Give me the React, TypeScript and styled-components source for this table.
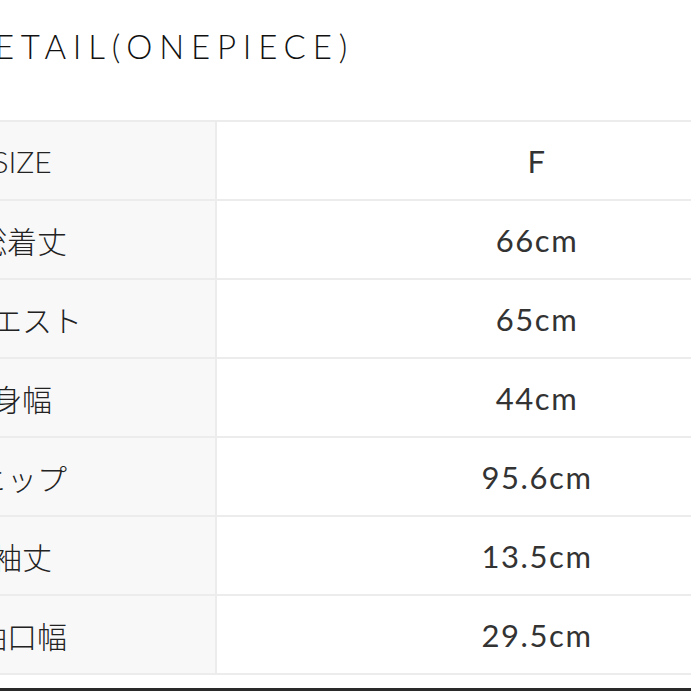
import React from "react";
import styled, { createGlobalStyle } from "styled-components";

const GlobalStyle = createGlobalStyle`
  html, body {
    margin: 0;
    padding: 0;
    background: #ffffff;
  }
  body {
    font-family: Lato, "Noto Sans CJK JP", sans-serif;
    color: #222222;
  }
`;

const Page = styled.div`
  width: 691px;
  height: 691px;
  overflow: hidden;
  display: flex;
  flex-direction: column;
  background: #ffffff;
`;

const Frame = styled.div`
  flex: 1;
  margin-left: -171px;
  display: flex;
  flex-direction: column;
`;

const Title = styled.h2`
  margin: 0;
  padding: 26px 0 0 134px;
  height: 120px;
  box-sizing: border-box;
  font-family: Lato, sans-serif;
  font-weight: 300;
  font-size: 33px;
  line-height: 40px;
  letter-spacing: 6.8px;
  color: #111111;
  white-space: nowrap;
`;

const Table = styled.div`
  display: grid;
  grid-template-columns: 388px 640px;
  border-top: 2px solid #ececec;
  width: 1028px;
`;

const LabelCell = styled.div`
  height: 77px;
  border-bottom: 2px solid #ececec;
  border-right: 2px solid #ececec;
  background: #f8f8f8;
  display: flex;
  align-items: center;
  justify-content: center;
  font-family: Lato, "Noto Sans CJK JP", sans-serif;
  font-weight: 300;
  font-size: 30px;
  color: #222222;
  white-space: nowrap;
`;

const ValueCell = styled.div`
  height: 77px;
  border-bottom: 2px solid #ececec;
  background: #ffffff;
  display: flex;
  align-items: center;
  justify-content: center;
  font-family: Lato, sans-serif;
  font-weight: 400;
  font-size: 31px;
  letter-spacing: 1.6px;
  color: #333333;
  white-space: nowrap;
`;

const Spacer = styled.div`
  flex: 1;
`;

const BottomBar = styled.div`
  height: 3px;
  background: #2a2a2a;
  flex: none;
`;

const rows: [string, string][] = [
  ["SIZE", "F"],
  ["総着丈", "66cm"],
  ["ウエスト", "65cm"],
  ["身幅", "44cm"],
  ["ヒップ", "95.6cm"],
  ["袖丈", "13.5cm"],
  ["袖口幅", "29.5cm"],
];

export default function App() {
  return (
    <Page>
      <GlobalStyle />
      <Frame>
        <Title>DETAIL(ONEPIECE)</Title>
        <Table>
          {rows.map(([label, value]) => (
            <React.Fragment key={label}>
              <LabelCell>{label}</LabelCell>
              <ValueCell>{value}</ValueCell>
            </React.Fragment>
          ))}
        </Table>
        <Spacer />
      </Frame>
      <BottomBar />
    </Page>
  );
}
